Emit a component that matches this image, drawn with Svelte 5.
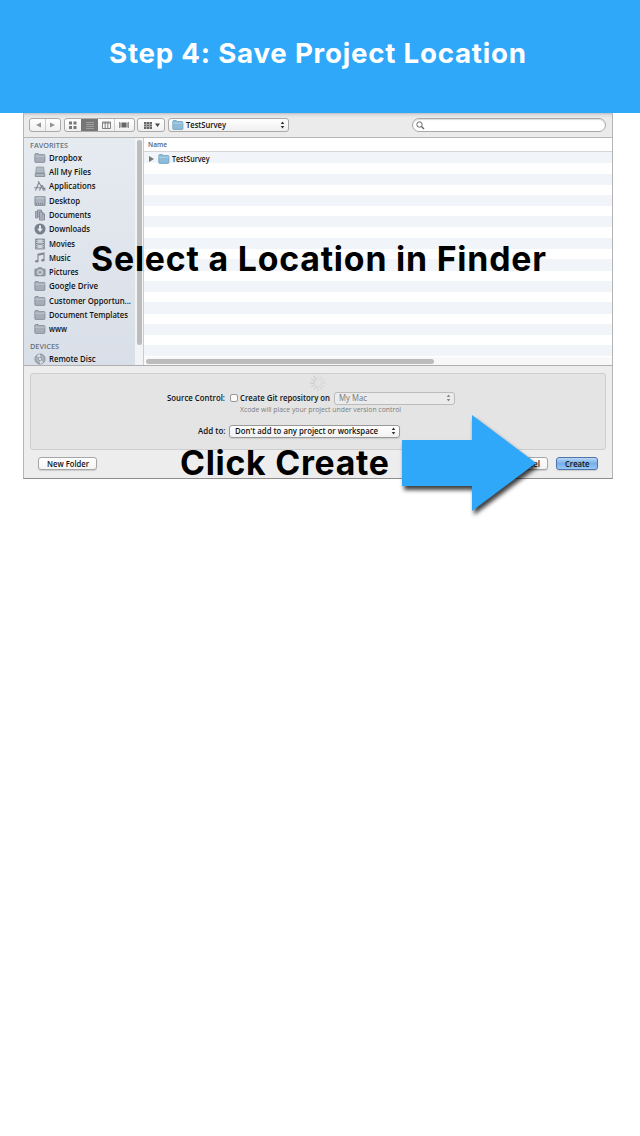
<script>
  const places = [
    ['Dropbox', 'folder', 33], ['All My Files', 'files', 42], ['Applications', 'apps', 46.5],
    ['Desktop', 'desktop', 31], ['Documents', 'docs', 42], ['Downloads', 'down', 41],
    ['Movies', 'movie', 26], ['Music', 'music', 21.5], ['Pictures', 'camera', 29.5],
    ['Google Drive', 'folder', 49], ['Customer Opportun...', 'folder', 82],
    ['Document Templates', 'folder', 79], ['www', 'folder', 18]
  ];
  const spokes = Array.from({ length: 12 }, (_, i) => i * 30);
</script>

{#snippet label(text, width, size = 8.5, weight = 600)}
  <svg class="label" width={width} height="12" style:font-size="{size}px" style:font-weight={weight}>
    <text x="0" y="9" textLength={width} lengthAdjust="spacingAndGlyphs">{text}</text>
  </svg>
{/snippet}

{#snippet title(text, width, size)}
  <svg class="title" width={width} height="50" style:font-size="{size}px">
    <text x="0" y="36" textLength={width}>{text}</text>
  </svg>
{/snippet}

{#snippet icon(kind)}
  <svg class="icon" width="12" height="12" viewBox="0 0 12 12" fill="none" stroke="#7f8893" stroke-width="1">
    {#if kind === 'folder'}
      <path d="M.8 2.5q0-.9.8-.9h2.7l.9 1h4.9q.8 0 .8.8v6.2q0 .8-.8.8H1.6q-.8 0-.8-.8z" fill="#a5adb8" stroke-width=".8" />
      <path d="M1 4.2h9.8" stroke="#cbd0d7" stroke-width=".8" />
    {:else if kind === 'blue'}
      <path d="M.8 2.5q0-.9.8-.9h2.7l.9 1h4.9q.8 0 .8.8v6.2q0 .8-.8.8H1.6q-.8 0-.8-.8z" fill="#8ebbd8" stroke="#6c9fbf" stroke-width=".8" />
      <path d="M1 4.2h9.8" stroke="#b8daed" stroke-width=".8" />
    {:else if kind === 'files'}
      <path d="M2.3 1h7.4l.6 6H1.7z" fill="#aab2bd" stroke="#959eaa" stroke-width=".8" /><path d="M3.3 3h5.2M3 5h6" stroke="#c5ccd5" stroke-width=".6" /><path d="M1.2 7.5h9.6v3H1.2z" fill="#aab2bd" stroke-width=".8" />
    {:else if kind === 'apps'}
      <path d="M1.5 10.5L5.2 1.7M4.2 1.2l5.6 9.6M.2 7.8h7M8 5l-2.5 5.5M8 5.2l3.2 5.3M7.7 8.2h4" stroke-width="1.1" />
    {:else if kind === 'desktop'}
      <path d="M1 1.8h10v8.5H1z" fill="#aab2bd" /><path d="M1.5 3h9" stroke="#ccd2da" /><path d="M2 8.8h8" stroke-dasharray="1 1" stroke="#69727d" />
    {:else if kind === 'docs'}
      <path d="M1.5 2.5h2V9h-2zM3.5 1h4v7h-4z" fill="#aab2bd" stroke-width=".8" /><path d="M5.5 3h3L10.5 5v6h-5zM8.3 3v2.5h2.2" fill="#b2bac5" stroke-width=".9" /><path d="M6.5 7h3M6.5 8.8h3" stroke-width=".6" />
    {:else if kind === 'down'}
      <circle cx="6" cy="6" r="5.5" fill="#77818d" stroke="none" /><path d="M6 2.5v4" stroke="#e8ecf1" stroke-width="2" /><path d="M3 5.7h6L6 9z" fill="#e8ecf1" stroke="none" />
    {:else if kind === 'movie'}
      <path d="M1.5 1h9v10h-9z" fill="#b7bec8" stroke-width=".8" /><path d="M2.7 1v10M9.3 1v10" stroke="#7e8793" stroke-dasharray="1 1" /><path d="M3.5 6h5" stroke="#7e8793" /><path d="M4 2h4v3H4zM4 7h4v3H4z" fill="#ced5dd" stroke="none" />
    {:else if kind === 'music'}
      <path d="M4 9V2.3L10 1v7" stroke-width="1.1" /><path d="M4 3L10 1.7" stroke-width="1.5" /><ellipse cx="2.8" cy="9.2" rx="1.7" ry="1.3" fill="#7f8893" stroke="none" /><ellipse cx="8.8" cy="8.3" rx="1.7" ry="1.3" fill="#7f8893" stroke="none" />
    {:else if kind === 'camera'}
      <path d="M1 3.2h2.4l1-1.4h3.2l1 1.4H11v6.6H1z" fill="#98a1ad" /><circle cx="6" cy="6.3" r="2.4" fill="#aab2bd" stroke="#e0e4e9" stroke-width=".9" /><circle cx="6" cy="6.3" r=".8" fill="#737d89" stroke="none" />
    {:else if kind === 'disc'}
      <circle cx="6" cy="6" r="5" fill="#aab2bc" stroke="#858e99" /><path d="M6 6L2.8 2.4A5 5 0 0 1 6 1zM6 6l3.2 3.6A5 5 0 0 1 6 11z" fill="#d6dbe0" stroke="none" /><circle cx="6" cy="6" r="1.6" fill="#dfe4e9" stroke-width=".6" />
    {/if}
  </svg>
{/snippet}

{#snippet stepper()}
  <svg class="stepper" width="5" height="8" viewBox="0 0 5 8"><path d="M.7 3L2.5.4 4.3 3zM.7 5L2.5 7.6 4.3 5z" fill="currentColor" /></svg>
{/snippet}

<main>
  <header>{@render title('Step 4: Save Project Location', 417, 27.7)}</header>

  <section class="window">
    <div class="toolbar">
      <div class="control nav">
        <svg width="30" height="12"><path d="M11 3.5v5L6 6zM20 3.5v5L25 6z" fill="#929292" /><path d="M15.5 0v12" stroke="#ccc" /></svg>
      </div>
      <div class="control views">
        <svg width="69" height="12">
          <path d="M16 0h17v12H16z" fill="#777" />
          <path d="M4 2.5h3v3H4zM8.5 2.5h3v3h-3zM4 7h3v3H4zM8.5 7h3v3h-3z" fill="#777" />
          <path d="M21 3.5h8M21 5.5h8M21 7.5h8M21 9.5h8" stroke="#aaa" stroke-width=".8" />
          <path d="M37.5 3h8v6.5h-8zM40.2 3v6.5M42.8 3v6.5M37.5 4h8" fill="none" stroke="#777" stroke-width=".9" />
          <path d="M56.5 3.5h5v5h-5z" fill="#666" /><path d="M54.5 3v6M55.8 3.5v5M62.3 3.5v5M63.5 3v6" stroke="#777" stroke-width=".8" />
          <path d="M49.5 0v12" stroke="#ccc" />
        </svg>
      </div>
      <div class="control arrange">
        <svg width="26" height="12"><path d="M6 3h8v7H6z" fill="#aaa" /><path d="M6 3h2v2H6zM9 3h2v2H9zM12 3h2v2h-2zM6 6h2v1H6zM9 6h2v1H9zM12 6h2v1h-2zM6 8h2v2H6zM9 8h2v2H9zM12 8h2v2h-2z" fill="#666" /><path d="M17 4.5h5l-2.5 3.5z" fill="#444" /></svg>
      </div>
      <div class="control path">{@render icon('blue')}{@render label('TestSurvey', 40)}{@render stepper()}</div>
      <div class="search"><svg width="9" height="9"><circle cx="3.5" cy="3.5" r="2.7" fill="none" stroke="#666" /><path d="M5.5 5.5L8 8" stroke="#666" stroke-width="1.4" /></svg></div>
    </div>

    <div class="browser">
      <aside>
        <div class="heading">{@render label('FAVORITES', 38, 7.2, 600)}</div>
        {#each places as [name, kind, width]}
          <div class="place">{@render icon(kind)}{@render label(name, width)}</div>
        {/each}
        <div class="heading devices">{@render label('DEVICES', 29, 7.2, 600)}</div>
        <div class="place">{@render icon('disc')}{@render label('Remote Disc', 46.5)}</div>
      </aside>
      <div class="sidescroll"><i></i></div>
      <div class="listing">
        <div class="column">{@render label('Name', 19, 7.4)}</div>
        <div class="rows">
          <div class="row"><svg width="5" height="6"><path d="M0 0v6l5-3z" fill="#777" /></svg>{@render icon('blue')}{@render label('TestSurvey', 37.5)}</div>
        </div>
        <div class="bottomscroll"><i></i></div>
      </div>
    </div>

    <div class="options">
      <div class="panel">
        <svg class="spinner" width="20" height="16" viewBox="-10 -8 20 16">
          {#each spokes as angle, i}<path d="M0-3.5V-7.5" stroke="#aaa" stroke-width="1.3" stroke-linecap="round" opacity={0.12 + i * 0.025} transform="rotate({angle})" />{/each}
        </svg>
        <div class="line source"><span class="lead">{@render label('Source Control:', 58)}</span><span class="check"></span>{@render label('Create Git repository on', 90)}<div class="select disabled">{@render label('My Mac', 28, 8.5, 500)}{@render stepper()}</div></div>
        <div class="hint">{@render label('Xcode will place your project under version control', 161, 7.2, 500)}</div>
        <div class="line add"><span class="lead">{@render label('Add to:', 27.5)}</span><div class="select target">{@render label("Don't add to any project or workspace", 143)}{@render stepper()}</div></div>
      </div>
      <div class="actions">
        <button>{@render label('New Folder', 42)}</button>
        <button class="cancel">{@render label('Cancel', 26)}</button>
        <button class="primary">{@render label('Create', 24.5)}</button>
      </div>
    </div>
  </section>

  <div class="overlay select-note">{@render title('Select a Location in Finder', 455, 33.8)}</div>
  <div class="overlay create-note">{@render title('Click Create', 209, 33.8)}</div>
  <svg class="overlay arrow" width="155" height="115"><path d="M2 29h70V4l64 48-64 48V75H2z" fill="#30a8fa" /></svg>
</main>

<style>
  :global(body) { margin: 0; background: #fff; }
  main { position: relative; height: 1136px; background: #fff; overflow: hidden; }
  svg { display: block; flex: none; }
  .label, .title { overflow: visible; }
  .label { font-family: "Open Sans", "Noto Sans", sans-serif; fill: currentColor; }
  .title { font-family: Inter, sans-serif; font-weight: 700; font-variant-ligatures: none; fill: currentColor; }
  header { height: 113px; box-sizing: border-box; padding: 27px 0 0 109px; background: #30a8fa; color: #fff; }
  .window { box-sizing: border-box; width: 590px; height: 366px; margin-left: 23px; border: 1px solid #b5b5b5; border-top: 0; border-bottom-color: #8d8d8d; background: #ededed; color: #111; }
  .toolbar { height: 25px; box-sizing: border-box; display: flex; align-items: flex-start; padding: 5px 6px 0 5px; border-bottom: 1px solid #b7b7b7; background: linear-gradient(#bfbfbf 0, #dedede 2px, #ebebeb 5px, #ebebeb 100%); }
  .control { box-sizing: border-box; height: 14px; border: 1px solid #aaa; border-radius: 3px; background: linear-gradient(#fff, #efefef); overflow: hidden; }
  .nav { width: 32px; }
  .views { width: 71px; margin-left: 3px; }
  .arrange { width: 28px; margin-left: 2px; }
  .path { width: 121px; margin-left: 3px; padding: 0 4px 0 3px; display: flex; align-items: center; }
  .path .label { margin-left: 1.5px; }
  .stepper { margin-left: auto; color: #333; }
  .path .stepper { margin-right: -1px; }
  .search { box-sizing: border-box; width: 194px; height: 14px; margin-left: auto; padding: 2px 3px; border: 1px solid #a9a9a9; border-radius: 7px; background: #fff; box-shadow: inset 0 1px 1px #ddd; }
  .browser { height: 228px; display: flex; border-bottom: 1px solid #aeaeae; box-sizing: border-box; overflow: hidden; }
  aside { width: 111px; background: linear-gradient(#e6ebf1, #d9dfe8); flex: none; }
  .heading { height: 12.8px; padding: 1px 0 0 6px; box-sizing: border-box; color: #66717e; }
  .place { height: 14.27px; display: flex; align-items: center; gap: 3px; padding-left: 10px; }
  .devices { height: 16px; padding-top: 3.5px; }
  .sidescroll { box-sizing: border-box; width: 9px; padding: 2px 2px 0; background: #f2f3f5; border-right: 1px solid #ccc; }
  .sidescroll i { display: block; width: 5px; height: 205px; border-radius: 3px; background: #bcbcbc; }
  .listing { flex: 1; display: flex; flex-direction: column; }
  .column { height: 14px; box-sizing: border-box; padding: 0 4px; border-bottom: 1px solid #d5d5d5; color: #526273; background: #fff; }
  .rows { flex: 1; background: repeating-linear-gradient(#f1f5fa 0, #f1f5fa 11px, #fff 11px, #fff 21.5px); }
  .row { display: flex; align-items: center; height: 13px; padding-left: 5px; }
  .row .icon { margin-left: 4px; }
  .row .label { margin-left: 2px; }
  .bottomscroll { height: 8px; padding: 2px 2px 0; box-sizing: border-box; background: #f8f8f8; }
  .bottomscroll i { display: block; width: 288px; height: 5px; border-radius: 3px; background: #bcbcbc; }
  .options { height: 112px; box-sizing: border-box; padding: 7px 6px 0; background: #ededed; }
  .panel { height: 77px; box-sizing: border-box; border: 1px solid #cecece; border-radius: 3px; background: #e4e4e4; }
  .spinner { margin: 1px 0 0 277px; }
  .line { display: flex; align-items: center; height: 14px; }
  .lead { width: 194px; display: flex; justify-content: flex-end; }
  .check { box-sizing: border-box; width: 8px; height: 8px; margin: 0 2px 0 5px; border: 1px solid #999; border-radius: 2px; background: #fbfbfb; }
  .select { box-sizing: border-box; width: 171px; height: 13px; padding: 0 3px 0 5px; margin-left: 4px; display: flex; align-items: center; border: 1px solid #999; border-radius: 3px; background: linear-gradient(#fff, #f2f2f2); box-shadow: 0 1px 1px #ccc; }
  .select.disabled { width: 121px; border-color: #bbb; background: #ebebeb; color: #777; box-shadow: none; padding-left: 4px; }
  .disabled .stepper { color: #888; }
  .hint { color: #7c7c7c; padding-left: 209px; height: 12px; margin-top: -2px; }
  .add { margin-top: 9px; }
  .actions { display: flex; padding: 7px 8px 0; }
  button { box-sizing: border-box; width: 59px; height: 13px; padding: 0; display: flex; justify-content: center; align-items: center; border: 1px solid #a6a6a6; border-radius: 3px; background: linear-gradient(#fff, #f4f4f4); color: #111; box-shadow: 0 1px 1px #ccc; }
  .cancel { width: 42px; margin-left: auto; }
  .primary { width: 42px; margin-left: 8px; border-color: #5272aa; background: linear-gradient(#b9d7f5, #75aeea 50%, #95caf8); }
  .overlay { position: absolute; color: #000; }
  .select-note { left: 91px; top: 235px; }
  .create-note { left: 180px; top: 439px; }
  .arrow { left: 400px; top: 411px; overflow: visible; filter: drop-shadow(2px 4px 2px rgba(0,0,0,.75)); }
</style>
